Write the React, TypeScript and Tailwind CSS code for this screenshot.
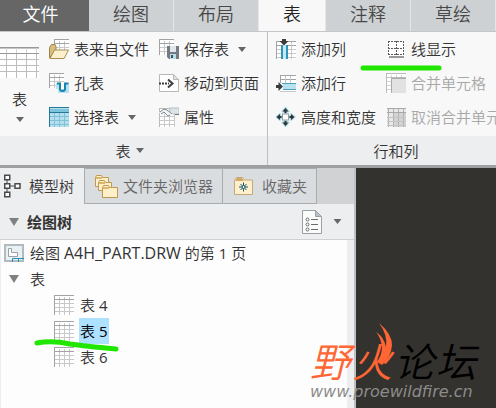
import type { ReactNode } from 'react'
import clsx from 'clsx'

function Caret({ className }: { className?: string }) {
  return (
    <svg viewBox="0 0 8 5" className={clsx('h-[5px] w-2 flex-none fill-[#666]', className)} aria-hidden="true">
      <path d="M0 0h8L4 5z" />
    </svg>
  )
}

function Icon({ children, className }: { children: ReactNode; className?: string }) {
  return (
    <svg viewBox="0 0 20 20" className={clsx('h-5 w-5 flex-none', className)} fill="none" aria-hidden="true">
      {children}
    </svg>
  )
}

// small table grid shared by most of the ribbon icons
function Grid({ x = 0, y = 0, w = 20, h = 20, line = '#c8c8c8', head = '#a3a3a3' }) {
  const cols: number[] = []
  const rows: number[] = []
  for (let i = x + 5; i < x + w; i += 5) cols.push(i)
  for (let i = y + 8; i < y + h; i += 4) rows.push(i)
  return (
    <g shapeRendering="crispEdges">
      <rect x={x} y={y} width={w} height={h} fill="#fff" />
      {cols.map((c) => <rect key={c} x={c} y={y + 2} width="1" height={h - 2} fill={line} />)}
      {rows.map((r) => <rect key={r} x={x} y={r} width={w} height="1" fill={line} />)}
      <rect x={x} y={y} width={w} height="1" fill={head} />
      <rect x={x} y={y} width="1" height={h} fill={head} />
      <rect x={x} y={y + 4} width={w} height="1" fill={head} />
    </g>
  )
}

const FromFileIcon = () => (
  <Icon>
    <Grid x={5} w={15} h={12} />
    <path d="M.5 19V8.500l2-3H6l1 2v3z" fill="#d9bd7e" stroke="#9c834c" />
    <path d="M1 19.500 5.500 11h14l-4.500 8.500z" fill="#fdf0cc" stroke="#a98d53" />
  </Icon>
)

const HoleTableIcon = () => (
  <Icon>
    <Grid w={15} h={15} />
    <path d="M7 10h13v10H9v-4H7z" fill="#b9e2f1" />
    <path d="M12 10h3v6h-3z" fill="#fff" />
    <path d="M8 10.500h3V16q0 2 2.500 2t2.500-2v-5.500h3.500" stroke="#1785ad" strokeWidth="2" />
  </Icon>
)

const SelectTableIcon = () => (
  <Icon>
    <g shapeRendering="crispEdges">
      <rect width="20" height="20" fill="#b4dfec" />
      <path d="M5.500 6v14M10.500 6v14M15.500 6v14M1 9.500h19M1 13.500h19M1 17.500h19" stroke="#84c0d5" />
      <rect x="1" y="2" width="19" height="3" fill="#7cc3dc" />
      <path d="M0 .5h20M0 5.500h20M.5 0v20" stroke="#25789a" />
    </g>
  </Icon>
)

const SaveTableIcon = () => (
  <Icon>
    <Grid w={15} h={16} />
    <path d="M8 7h12v13H10l-2-2z" fill="#737b81" />
    <path d="M11 7h6v6h-6z" fill="#dfe7ec" />
    <path d="M11 15h6v5h-6z" fill="#b8dcea" />
    <path d="M12 16h2v3h-2z" fill="#46525a" />
  </Icon>
)

const MovePageIcon = () => (
  <Icon>
    <path d="M.5 1.500h14l5 5v12H.5z" fill="#fff" stroke="#b8b8b8" />
    <path d="M14.500 1.500v5h5z" fill="#e3e3e3" stroke="#b8b8b8" />
    <path d="M0 10.500h10" stroke="#3c3c3c" strokeWidth="2" strokeDasharray="2 1" />
    <path d="m9 6.500 4.500 4-4.500 4" stroke="#3c3c3c" strokeWidth="2" />
  </Icon>
)

const PropertiesIcon = () => (
  <Icon>
    <Grid y={1} w={16} h={19} head="#bcbcbc" />
    <path d="M10 1h10v6h-8z" fill="#dde4e7" stroke="#b5c0c5" />
    <path d="M0 5.500 5 2l4 1 5 4-3 2-4-3-4 2z" fill="#f2f5f6" />
    <path d="m1 5 4-3 3 1 5 4M2 7l3-2 4 4 2-1" stroke="#80878a" />
    <path d="M16 7.500h4" stroke="#777" />
  </Icon>
)

const AddColumnIcon = () => (
  <Icon>
    <g shapeRendering="crispEdges">
      <rect y="2" width="20" height="18" fill="#fff" />
      <path d="M0 2.500h20M.5 2v18" stroke="#a3a3a3" />
      <path d="M0 6.500h20" stroke="#a3a3a3" />
      <path d="M15.500 3v17M1 10.500h19M1 14.500h19M1 18.500h19" stroke="#c8c8c8" />
      <path d="M5 6h7v14H5z" fill="#c5eaf5" />
      <path d="M6 6v14M11 6v14" stroke="#2d95ba" strokeWidth="2" />
    </g>
    <path d="M6 0h4v2h2.500L8 6.500 3.500 2H6z" fill="#3c3c3c" />
  </Icon>
)

const AddRowIcon = () => (
  <Icon>
    <g shapeRendering="crispEdges">
      <rect x="4" y="2" width="16" height="16" fill="#fff" />
      <path d="M4 2.500h16M4.500 2v8M4 6.500h16" stroke="#a3a3a3" />
      <path d="M9.500 3v7M14.500 3v7M4 18.500h16" stroke="#c8c8c8" />
      <path d="M7 11h13v5H7z" fill="#b9e2f1" />
      <path d="M6 10.500h14M7 16.500h13" stroke="#4aa3c4" />
    </g>
    <path d="M0 12h2.500V9L7 13.500 2.500 18v-3H0z" fill="#3c3c3c" />
  </Icon>
)

const SizeIcon = () => (
  <Icon>
    <g stroke="#a9ddec" strokeWidth="2" strokeLinejoin="round" fill="#333" paintOrder="stroke">
      <path d="m9.500 1 3 3.500h-2V6h-2V4.500h-2z" />
      <path d="m9.500 19 3-3.500h-2V14h-2v1.500h-2z" />
      <path d="m.5 10 3.500-3v2h1.500v2H4v2z" />
      <path d="M18.500 10 15 7v2h-1.500v2H15v2z" />
    </g>
    <rect x="6.500" y="7" width="6" height="6" fill="#fff" stroke="#9b9b9b" />
  </Icon>
)

const LineDisplayIcon = () => (
  <Icon>
    <rect x="2" y="2" width="16" height="16" fill="#fff" />
    <path
      d="M2 2.500h16M2 9.500h16M2 15.500h16M2.500 2v14M10.500 2v14M17.500 2v14"
      stroke="#5c5c5c"
      strokeDasharray="2 1"
    />
    <path d="M3 18h15" stroke="#999" strokeWidth="2" />
  </Icon>
)

const MergeIcon = () => (
  <Icon>
    <Grid head="#bcbcbc" line="#d4d4d4" />
    <path d="M5.500 5.500H20V20H5.500z" fill="#e2e2e2" />
    <path d="M20 5.500H5.500V20" stroke="#aaa" />
  </Icon>
)

const UnmergeIcon = () => (
  <Icon>
    <g shapeRendering="crispEdges">
      <path d="M1 1h19v19H1z" fill="#e9e9e9" />
      <path d="M7 6h13v14H7z" fill="#d4d4d4" />
      <path d="M2.500 1v19M7.500 1v19M12.500 1v19M17.500 1v19" stroke="#b0b0b0" />
      <path d="M1 10.500h19M1 14.500h19M1 18.500h19" stroke="#c4c4c4" />
      <path d="M1 1.500h19M1 5.500h19" stroke="#a8a8a8" />
    </g>
  </Icon>
)

const BigTableIcon = () => (
  <svg viewBox="0 0 40 31" className="h-[31px] w-10" shapeRendering="crispEdges" aria-hidden="true">
    <path d="M0 0h39v31H0z" fill="#fff" />
    <path d="M0 0h39v1H0zM0 6h39v1H0z" fill="#999" />
    <path d="M0 1h39v1H0z" fill="#c6c6c6" />
    <path
      d="M6.500 7v24M16.500 7v24M26.500 7v24M36.500 7v24M0 12.500h39M0 18.500h39M0 24.500h39"
      stroke="#bdbdbd"
    />
    <path d="M6.500 1v5M16.500 1v5M26.500 1v5M36.500 1v5" stroke="#d4d4d4" />
  </svg>
)

const ModelTreeIcon = () => (
  <svg viewBox="0 0 17 25" className="h-[25px] w-[17px]" fill="none" stroke="#4a4a4a" aria-hidden="true">
    <path d="M3 6v3M3 15v3M6 12h5" />
    <g fill="#fff" strokeWidth="1.500">
      <path d="M.75 1.250h5v4.500h-5zM.75 9.750h5v4.500h-5zM.75 18.250h5v4.500h-5zM11 9.750h5v4.500h-5z" />
    </g>
  </svg>
)

const FoldersIcon = () => (
  <svg viewBox="0 0 24 25" className="h-[25px] w-6" fill="#fff0ca" stroke="#c19852" aria-hidden="true">
    <path d="M1.500 12.500v-9l1-2h5l1 2h6v9z" />
    <path d="M4.500 16.500v-8l1-2h5l1 2h6v8z" />
    <path d="M8.500 23.500v-10l1-2h5l1 2h8v10z" />
    <path d="M2 4h6M5 9h6M9 14h6" stroke="#dcb66f" strokeWidth="2" />
  </svg>
)

const FavoritesIcon = () => (
  <svg viewBox="0 0 21 20" className="h-5 w-[21px]" fill="none" aria-hidden="true">
    <path d="M1.500 18.500v-14l2-3h6l2 2.500h8v14.500z" fill="#fff0cc" stroke="#c3a87c" />
    <path d="M2 5 4 2h5l2 3z" fill="#d3ab69" />
    <path d="M10.500 6.500v9M6 11h9M7.500 8l6 6M13.500 8l-6 6" stroke="#15566f" />
    <circle cx="10.500" cy="11" r="1.500" fill="#fff" stroke="#15566f" />
  </svg>
)

const ListPageIcon = () => (
  <svg viewBox="0 0 20 26" className="h-[26px] w-5" fill="none" aria-hidden="true">
    <path d="M.5 1.500h13l6 6v17H.5z" fill="#fafcfc" stroke="#9aa1a4" />
    <path d="M13.500 1.500v6h6z" fill="#b9c3c7" stroke="#9aa1a4" />
    <g stroke="#6c6c6c">
      <circle cx="5.500" cy="10.500" r="1.500" />
      <circle cx="5.500" cy="15.500" r="1.500" />
      <circle cx="5.500" cy="20.500" r="1.500" />
      <path d="M9 10.500h7M9 15.500h7M9 20.500h7" />
    </g>
  </svg>
)

const DrawingIcon = () => (
  <svg viewBox="0 0 20 18" className="h-[18px] w-5" fill="none" aria-hidden="true">
    <path d="M1 1h18v16H1z" fill="#eaf1f4" stroke="#b0babf" strokeWidth="2" />
    <path d="M4.500 4.500h3v4h6v4h-9z" fill="#fff" stroke="#9aa2a6" />
    <path d="M8.500 18v-3.500H20M14.500 15v3" stroke="#2491bd" />
  </svg>
)

function Tool({ icon, label, menu, disabled }: { icon: ReactNode; label: string; menu?: boolean; disabled?: boolean }) {
  return (
    <button type="button" disabled={disabled} className="flex h-[34px] items-center whitespace-nowrap disabled:text-[#a8a8a8]">
      {icon}
      <span className="ml-[5px]">{label}</span>
      {menu && <Caret className="ml-[9px]" />}
    </button>
  )
}

const TABS = ['绘图', '布局', '表', '注释', '草绘']

function RibbonTabs() {
  return (
    <nav className="flex h-8 overflow-hidden border-b border-[#c3c7ca] bg-[#cdd1d3] text-lg leading-7 text-[#484848]">
      <button type="button" className="h-8 w-[89px] flex-none bg-[#666] pr-2 pb-1 text-white">文件</button>
      {TABS.map((tab) => (
        <button
          key={tab}
          type="button"
          className={clsx(
            'h-[31px] flex-none border-r border-[#e4e6e7] px-6 pb-1',
            tab === '表' && 'bg-[#f8f8f8] text-[#222]'
          )}
        >
          {tab}
        </button>
      ))}
    </nav>
  )
}

function Ribbon() {
  return (
    <div className="relative flex h-[133px] overflow-hidden bg-[#f8f8f8]">
      <section className="flex w-[268px] flex-none flex-col border-r border-[#bcbec0]">
        <div className="flex h-[104px]">
          <button type="button" className="flex w-[39px] flex-none flex-col items-center pt-[15px]">
            <BigTableIcon />
            <span className="mt-[11px] leading-5">表</span>
            <Caret className="mt-2" />
          </button>
          <div className="ml-[10px] flex gap-[10px]">
            <div>
              <Tool icon={<FromFileIcon />} label="表来自文件" />
              <Tool icon={<HoleTableIcon />} label="孔表" />
              <Tool icon={<SelectTableIcon />} label="选择表" menu />
            </div>
            <div>
              <Tool icon={<SaveTableIcon />} label="保存表" menu />
              <Tool icon={<MovePageIcon />} label="移动到页面" />
              <Tool icon={<PropertiesIcon />} label="属性" />
            </div>
          </div>
        </div>
        <button type="button" className="flex flex-1 items-center justify-center gap-[5px] bg-[#edeef0] pr-2">
          表 <Caret />
        </button>
      </section>
      <section className="flex flex-none flex-col">
        <div className="flex h-[104px] gap-[10px] px-2">
          <div>
            <Tool icon={<AddColumnIcon />} label="添加列" />
            <Tool icon={<AddRowIcon />} label="添加行" />
            <Tool icon={<SizeIcon />} label="高度和宽度" />
          </div>
          <div>
            <Tool icon={<LineDisplayIcon />} label="线显示" />
            <Tool icon={<MergeIcon />} label="合并单元格" disabled />
            <Tool icon={<UnmergeIcon />} label="取消合并单元格" disabled />
          </div>
        </div>
        <div className="flex flex-1 items-center justify-center bg-[#edeef0]">行和列</div>
      </section>
      {/* highlighter mark under 线显示 */}
      <svg viewBox="0 0 82 6" className="absolute top-[33px] left-[360px] h-[6px] w-[82px]" aria-hidden="true">
        <path d="M3 3h76" stroke="#20e600" strokeWidth="5" strokeLinecap="round" />
      </svg>
    </div>
  )
}

function SideTabs() {
  return (
    <div className="flex h-9 bg-[#d0d2d4] text-[#666]">
      <button type="button" className="flex w-[84px] items-center gap-2 bg-[#edeef0] pl-1 whitespace-nowrap text-[#383838]">
        <ModelTreeIcon />
        模型树
      </button>
      <button type="button" className="flex items-center gap-[5px] border border-[#a9acae] bg-[#dadddf] px-[9px] whitespace-nowrap">
        <FoldersIcon />
        文件夹浏览器
      </button>
      <button type="button" className="flex items-center gap-2 border border-l-0 border-[#a9acae] bg-[#dadddf] pr-[9px] pl-[10px] whitespace-nowrap">
        <FavoritesIcon />
        收藏夹
      </button>
    </div>
  )
}

function Twisty() {
  return (
    <svg viewBox="0 0 10 8" className="h-2 w-[10px] flex-none fill-[#808080]" aria-hidden="true">
      <path d="M0 0h10L5 8z" />
    </svg>
  )
}

const TABLES = ['4', '5', '6']

function ModelTree() {
  return (
    <aside className="flex w-[356px] flex-none flex-col border-r-2 border-[#bfc2c4] bg-[#edeef0]">
      <SideTabs />
      <div className="flex h-9 items-center border-b border-[#cfd1d3] pr-3 pl-[9px]">
        <Twisty />
        <h2 className="ml-2 font-bold">绘图树</h2>
        <button type="button" aria-label="设置" className="ml-auto flex items-center gap-[11px]">
          <ListPageIcon />
          <Caret className="w-[9px]" />
        </button>
      </div>
      <div className="relative mr-[7px] ml-px flex-1 bg-[#fdfdfd]">
        <ul className="leading-[26px]">
          <li className="flex h-[26px] items-center gap-[6px] pl-[3px] whitespace-nowrap">
            <DrawingIcon />
            <span>
              绘图 <span className="text-base leading-[26px] font-normal">A4H_PART.DRW</span> 的第{' '}
              <span className="font-normal">1</span> 页
            </span>
          </li>
          <li>
            <div className="flex h-[26px] items-center gap-[11px] pl-2">
              <Twisty />
              表
            </div>
            <ul className="pl-[53px]">
              {TABLES.map((no) => (
                <li key={no} className="flex h-[26px] items-center gap-[5px]">
                  <Icon><Grid /></Icon>
                  <span className={clsx('pr-0.5 pl-px', no === '5' && 'bg-[#aee0ff] text-black')}>
                    表 <span className="font-normal">{no}</span>
                  </span>
                </li>
              ))}
            </ul>
          </li>
        </ul>
        {/* highlighter mark under the selected table */}
        <svg viewBox="0 0 86 14" className="absolute top-[98px] left-[33px] h-[14px] w-[86px]" fill="none" aria-hidden="true">
          <path d="M3 5Q18 2 36 6Q50 8 82 11" stroke="#20e600" strokeWidth="5" strokeLinecap="round" />
        </svg>
      </div>
    </aside>
  )
}

function Watermark() {
  return (
    <div className="absolute right-5 bottom-[6px] whitespace-nowrap">
      <div className="relative flex gap-0.5 text-[40px] leading-10 italic">
        <span className="text-[#ff6633]">野</span>
        <span className="text-[#ff6633]">火</span>
        <span className="text-black">论</span>
        <span className="text-black">坛</span>
        <svg viewBox="0 0 20 42" className="absolute -top-[19px] left-[65px] h-[42px] w-5 fill-[#ff6633]" aria-hidden="true">
          <path d="M4 0Q17 11 17 22Q16 34 7 42L2 39Q7 32 7 24Q6 15 1 9Q9 14 11 24Q13 12 4 0z" />
        </svg>
      </div>
      <div className="font-['DejaVu_Sans'] text-base leading-5 text-[#8c8c8c] italic">www.proewildfire.cn</div>
    </div>
  )
}

export default function App() {
  return (
    <div className="relative flex min-h-screen flex-col overflow-hidden bg-[#edeef0] font-['Open_Sans','Noto_Sans_CJK_SC',sans-serif] text-[15px] leading-5 font-[350] text-[#333]">
      <RibbonTabs />
      <Ribbon />
      <div className="flex flex-1 border-t-3 border-[#a0a0a0]">
        <ModelTree />
        <main className="flex-1 bg-[#33322e]" />
      </div>
      <Watermark />
    </div>
  )
}
